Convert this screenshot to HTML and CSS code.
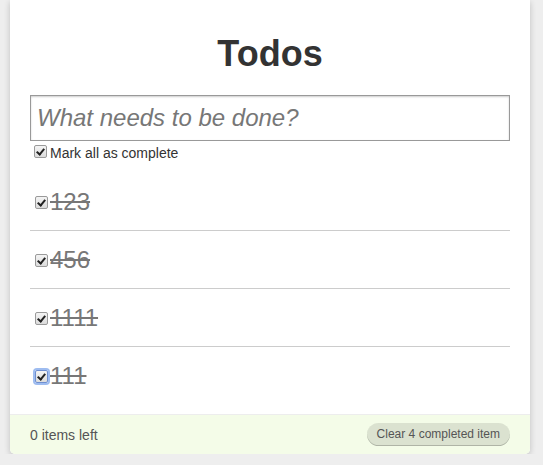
FILE: index.html
```html
<!DOCTYPE html>
<html>
<head>
<meta charset="utf-8">
<title>Todos</title>
<link rel="stylesheet" href="styles.css">
</head>
<body>
<div class="app">
  <h1 class="title">Todos</h1>
  <input class="new-todo" type="text" placeholder="What needs to be done?">
  <label class="mark-all"><input class="check" type="checkbox" checked>Mark all as complete</label>
  <ul class="list">
    <li class="item"><input class="check" type="checkbox" checked><span class="label">123</span></li>
    <li class="item"><input class="check" type="checkbox" checked><span class="label">456</span></li>
    <li class="item"><input class="check" type="checkbox" checked><span class="label">1111</span></li>
    <li class="item"><input class="check focused" type="checkbox" checked><span class="label">111</span></li>
  </ul>
  <footer class="footer">
    <span class="count">0 items left</span>
    <span class="clear">Clear 4 completed item</span>
  </footer>
</div>
</body>
</html>
```

FILE: styles.css
```css
html, body {
  margin: 0;
  padding: 0;
}
body {
  background: #eeeeee;
  color: #333333;
  font: 14px "Liberation Sans", Arial, sans-serif;
  padding-left: 10px;
}
.app {
  width: 520px;
  box-sizing: border-box;
  background: #fff;
  padding: 20px 20px 0;
  box-shadow: rgba(0, 0, 0, 0.2) 0 2px 6px 0;
  border-radius: 0 0 5px 5px;
}
.title {
  margin: 0 0 7px;
  font-size: 36px;
  line-height: 68px;
  font-weight: bold;
  text-align: center;
  color: #333;
}
.new-todo {
  display: block;
  box-sizing: border-box;
  width: 480px;
  height: 46px;
  margin: 0;
  padding: 0 6px;
  font: 24px "Liberation Sans", Arial, sans-serif;
  border: 1px solid #999999;
  box-shadow: rgba(0, 0, 0, 0.2) 0 1px 2px 0 inset;
  outline: none;
  color: #333;
}
.new-todo::placeholder {
  font-style: italic;
  color: #777;
}
.mark-all {
  display: flex;
  align-items: center;
  padding-top: 2px;
  height: 20px;
  line-height: 20px;
  color: #333;
}
.check {
  appearance: none;
  -webkit-appearance: none;
  box-sizing: border-box;
  position: relative;
  width: 13px;
  height: 13px;
  margin: 0 3px 0 4px;
  flex: none;
  border: 1px solid #9a9a9a;
  border-radius: 2px;
  background: linear-gradient(#f4f4f4, #dcdcdc);
}
.check::after {
  content: "";
  position: absolute;
  left: 3px;
  top: 1px;
  width: 3px;
  height: 6px;
  border: solid #222;
  border-width: 0 2px 2px 0;
  transform: rotate(40deg);
}
.check.focused {
  box-shadow: 0 0 0 2px #9ebcf0;
  border-color: #6f8fd0;
}
.mark-all .check {
  margin-top: -4px;
}
.list {
  margin: 10px 0;
  padding: 0;
  list-style: none;
}
.item {
  display: flex;
  align-items: center;
  padding: 15px 20px 15px 0;
  font-size: 24px;
  line-height: 27px;
  border-bottom: 1px solid #cccccc;
}
.item .check {
  margin-left: 5px;
  margin-right: 2px;
  margin-top: 1px;
}
.item:last-child {
  border-bottom: none;
}
.label {
  color: #777777;
  text-decoration: line-through;
}
.footer {
  display: flex;
  justify-content: space-between;
  align-items: center;
  margin: 0 -20px;
  padding: 0 20px;
  height: 39px;
  color: #555555;
  background: #f4fce8;
  border-top: 1px solid #ededed;
  border-radius: 0 0 5px 5px;
}
.count {
  line-height: 20px;
}
.clear {
  line-height: 22px;
  font-size: 12px;
  padding: 0 10px 1px;
  color: #555555;
  background: rgba(0, 0, 0, 0.1);
  border-radius: 12px;
  box-shadow: rgba(0, 0, 0, 0.2) 0 -1px 0 0 inset;
}
```
